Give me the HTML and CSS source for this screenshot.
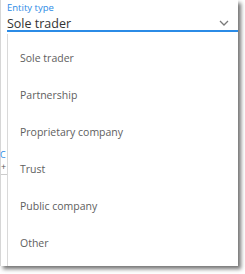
FILE: index.html
```html
<!DOCTYPE html>
<html>
<head>
<meta charset="utf-8">
<link rel="stylesheet" href="styles.css">
</head>
<body>
<div class="frame">
  <div class="field">
    <div class="label">Entity type</div>
    <div class="value-row">
      <span class="value">Sole trader</span>
      <svg class="chevron" width="10" height="6" viewBox="0 0 10 6"><path d="M1 1 L5 5 L9 1" fill="none" stroke="#7a7a7a" stroke-width="1.3"/></svg>
    </div>
  </div>
  <div class="behind">
    <div class="behind-link">C</div>
    <div class="behind-add">+</div>
    <div class="behind-rule"></div>
  </div>
  <ul class="menu">
    <li>Sole trader</li>
    <li>Partnership</li>
    <li>Proprietary company</li>
    <li>Trust</li>
    <li>Public company</li>
    <li>Other</li>
  </ul>
</div>
</body>
</html>
```
FILE: styles.css
```css
html, body {
  margin: 0;
  padding: 0;
  background: #fff;
}
body {
  width: 245px;
  height: 274px;
  overflow: hidden;
  font-family: "Open Sans", "Noto Sans", sans-serif;
}
.frame {
  position: relative;
  width: 237px;
  height: 266px;
  border-left: 1px solid #d6d6d6;
  background: #fff;
  box-shadow: 3px 3px 4px rgba(0, 0, 0, 0.55);
}
.field {
  margin-left: 6px;
  padding-top: 2px;
  border-bottom: 2px solid #2b8be6;
  height: 28px;
}
.label {
  font-size: 9.5px;
  line-height: 12px;
  color: #2b8be6;
}
.value-row {
  display: flex;
  align-items: center;
  justify-content: space-between;
  padding-right: 9px;
  margin-top: 2px;
}
.value {
  font-size: 12.5px;
  line-height: 15px;
  color: #333;
}
.chevron {
  display: block;
  margin-top: -1px;
}
.behind {
  padding-top: 118px;
  font-size: 9px;
  line-height: 9px;
}
.behind-link {
  color: #2b8be6;
  margin-left: -1px;
}
.behind-add {
  color: #555;
  margin-top: 3px;
}
.behind-rule {
  margin-top: 3px;
  width: 6px;
  border-top: 1px solid #ccc;
}
.menu {
  position: absolute;
  left: 6px;
  top: 34px;
  right: 0;
  bottom: 0;
  margin: 0;
  padding: 5px 0;
  list-style: none;
  background: #fff;
  border-left: 1px solid #d9d9d9;
}
.menu li {
  height: 37px;
  display: flex;
  align-items: center;
  padding-left: 12px;
  font-size: 10.5px;
  color: #5e5e5e;
}
```
